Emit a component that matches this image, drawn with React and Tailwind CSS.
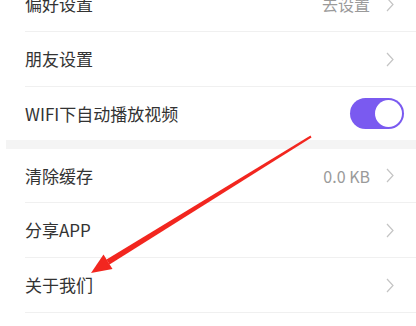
import React from 'react';

const Chevron = () => (
  <svg width="8" height="15" viewBox="0 0 8 15" className="shrink-0">
    <path d="M1 1 L7 7.5 L1 14" fill="none" stroke="#c4c4c4" strokeWidth="1.2" />
  </svg>
);

const Row = ({ label, value, last, height = 'h-[55px]', children }) => (
  <div className={`flex items-center ${height} ${last ? '' : 'border-b border-[#f0f0f0]'}`}>
    <span className="text-[17px] text-[#333333]">{label}</span>
    <div className="ml-auto flex items-center">
      {children ? (
        children
      ) : (
        <>
          {value && <span className="text-[16px] text-[#9a9a9a] mr-[16px]">{value}</span>}
          <div className="mr-[22px]">
            <Chevron />
          </div>
        </>
      )}
    </div>
  </div>
);

const App = () => {
  return (
    <div
      className="relative w-[416px] h-[326px] overflow-hidden bg-white"
      style={{ fontFamily: '"Noto Sans CJK SC", "Noto Sans", sans-serif' }}
    >
      <div className="-mt-[23px]">
        <div className="pl-[25px]">
          <Row label="偏好设置" value="去设置" />
          <Row label="朋友设置" />
          <Row label="WIFI下自动播放视频" last height="h-[53px]">
            <div className="mr-[12px] w-[54px] h-[31px] rounded-full bg-[#7a5af0] flex items-center justify-end pr-[2px]">
              <div className="w-[27px] h-[27px] rounded-full bg-white" />
            </div>
          </Row>
        </div>
        <div className="ml-[6px] h-[9px] bg-[#f4f4f4]" />
        <div className="pl-[25px]">
          <Row label="清除缓存" value="0.0 KB" height="h-[54px]" />
          <Row label="分享APP" />
          <Row label="关于我们" />
        </div>
      </div>

      {/* red annotation arrow */}
      <svg className="absolute inset-0 pointer-events-none" width="416" height="326" viewBox="0 0 416 326">
        <polygon points="310.5,135.5 311.5,137.5 109.5,264.5 106.5,259.5" fill="#f2261f" />
        <polygon points="91,273 103.5,254.5 112.5,269" fill="#f2261f" />
      </svg>
    </div>
  );
};

export default App;
